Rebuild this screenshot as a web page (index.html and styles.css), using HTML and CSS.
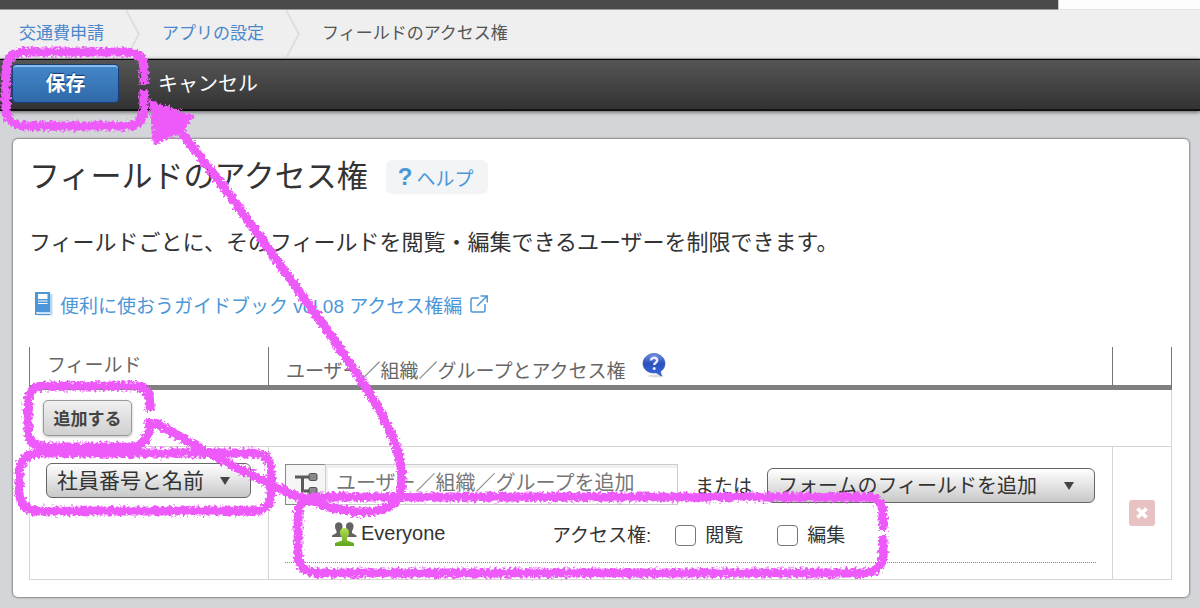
FILE: index.html
```html
<!DOCTYPE html>
<html lang="ja">
<head>
    <meta charset="UTF-8">
    <meta name="viewport" content="width=device-width, initial-scale=1.0">
    <title>フィールドのアクセス権</title>
    <link rel="stylesheet" href="styles.css">
</head>
<body>
    <div class="topbar">
        <div class="topbar-menu"></div>
        <div class="topbar-side"></div>
    </div>

    <nav class="breadcrumb">
        <a href="#">交通費申請</a>
        <svg class="chevron" width="14" height="48" viewBox="0 0 14 48"><path d="M0 0L13 24L0 48"/></svg>
        <a href="#">アプリの設定</a>
        <svg class="chevron" width="14" height="48" viewBox="0 0 14 48"><path d="M0 0L13 24L0 48"/></svg>
        <span>フィールドのアクセス権</span>
    </nav>

    <div class="toolbar">
        <button class="btn-save" type="button">保存</button>
        <button class="btn-cancel" type="button">キャンセル</button>
    </div>

    <main class="panel">
        <div class="title-row">
            <h1>フィールドのアクセス権</h1>
            <a class="help" href="#"><b>?</b>ヘルプ</a>
        </div>
        <p class="lead">フィールドごとに、そのフィールドを閲覧・編集できるユーザーを制限できます。</p>
        <a class="guide" href="#">
            <svg width="18" height="24" viewBox="0 0 18 24">
                <path d="M3 2h14.500v21.500H3z" fill="#b9d8f0"/>
                <path d="M0 0h15v20H1.500v1.500H15V23H0z" fill="#4b97d8"/>
                <path d="M1.500 20.500H15v1.500H1.500z" fill="#d5e8f7"/>
                <path d="M3 2h9.500v5H3zM3 8.500H12.500v1H3zM3 11H12.500v1H3z" fill="#fff"/>
            </svg>
            <span>便利に使おうガイドブック vol.08 アクセス権編</span>
            <svg width="20" height="20" viewBox="0 0 20 20" fill="none" stroke="#4b97d8" stroke-width="1.500">
                <path d="M10 4H3.500Q2 4 2 5.500V16.500Q2 18 3.500 18H14.500Q16 18 16 16.500V10"/>
                <path d="M8 12L18 2M11.500 2H18.200V8.500"/>
            </svg>
        </a>

        <table class="acl">
            <thead>
                <tr>
                    <th class="col-field">フィールド</th>
                    <th class="col-users">
                        <div class="th-users">
                            <span>ユーザー／組織／グループとアクセス権</span>
                            <svg width="24" height="26" viewBox="0 0 24 26">
                                <defs>
                                    <linearGradient id="tip" x1="0" y1="0" x2="0" y2="1">
                                        <stop offset="0" stop-color="#7392e6"/>
                                        <stop offset="0.450" stop-color="#2b50bd"/>
                                        <stop offset="1" stop-color="#3868dc"/>
                                    </linearGradient>
                                </defs>
                                <ellipse cx="14" cy="23" rx="8" ry="1.500" fill="#ddd"/>
                                <path d="M12 0.500C18 0.500 23 5 23 10.500C23 14 21 17 18.500 18.500L19.500 23L14 19.800C7 21 1 16.500 1 10.500C1 5 6 0.500 12 0.500Z" fill="url(#tip)" stroke="#2746a5" stroke-width="0.600"/>
                                <path d="M9 7.500C9 3.800 15.200 3.800 15.200 7.500C15.200 9.800 12.200 9.800 12.200 12" fill="none" stroke="#e8ecfa" stroke-width="2.400"/>
                                <circle cx="12.200" cy="15.500" r="1.500" fill="#e8ecfa"/>
                            </svg>
                        </div>
                    </th>
                    <th class="col-del"></th>
                </tr>
            </thead>
            <tbody>
                <tr class="row-add">
                    <td colspan="3"><button class="btn-add" type="button">追加する</button></td>
                </tr>
                <tr class="row-field">
                    <td class="cell-field">
                        <select class="dropdown" aria-label="フィールド">
                            <option>社員番号と名前</option>
                        </select>
                    </td>
                    <td class="cell-users">
                        <div class="picker">
                            <button class="btn-org" type="button" aria-label="組織">
                                <svg width="24" height="24" viewBox="0 0 24 24">
                                    <path d="M1 5H16M8.500 5V19H16" fill="none" stroke="#5a5a5a" stroke-width="3"/>
                                    <rect x="15" y="1.500" width="8" height="7" rx="1.500" fill="#888" stroke="#4e4e4e"/>
                                    <rect x="15" y="15.500" width="8" height="7" rx="1.500" fill="#888" stroke="#4e4e4e"/>
                                </svg>
                            </button>
                            <input class="user-input" type="text" aria-label="ユーザー" placeholder="ユーザー／組織／グループを追加">
                            <span class="or">または</span>
                            <select class="dropdown dropdown-form" aria-label="フォームのフィールド">
                                <option>フォームのフィールドを追加</option>
                            </select>
                        </div>
                        <div class="entity">
                            <svg width="27" height="26" viewBox="0 0 27 26">
                                <defs>
                                    <linearGradient id="person" x1="0" y1="0" x2="0" y2="1">
                                        <stop offset="0" stop-color="#b5df52"/>
                                        <stop offset="1" stop-color="#5ea51d"/>
                                    </linearGradient>
                                </defs>
                                <g fill="#636363">
                                    <path d="M4 5C4 0 11.500 0 11.500 5C11.500 8 10.500 9 10 10V12L14 14V16H1V14.500L5.500 12V10C4.500 8.500 4 7 4 5Z"/>
                                    <path d="M15 5C15 0 22.500 0 22.500 5C22.500 7 22 8.500 21 10V12L25.500 14.500V16H12V14L16.500 12V10C15.500 8.500 15 7 15 5Z"/>
                                </g>
                                <path d="M9 11C9 5.500 18 5.500 18 11C18 14 17 16 16 17V19.500L23 22V25H4V22L11 19.500V17C10 16 9 14 9 11Z" fill="url(#person)"/>
                            </svg>
                            <span class="entity-name">Everyone</span>
                            <span class="entity-label">アクセス権:</span>
                            <label class="check"><input type="checkbox">閲覧</label>
                            <label class="check"><input type="checkbox">編集</label>
                        </div>
                    </td>
                    <td class="cell-del">
                        <button class="btn-del" type="button" aria-label="削除">
                            <svg width="14" height="14" viewBox="0 0 14 14"><path d="M2.500 2.500L11.500 11.500M11.500 2.500L2.500 11.500" stroke="#fff" stroke-width="3.800"/></svg>
                        </button>
                    </td>
                </tr>
            </tbody>
        </table>
    </main>

    <!-- hand-drawn marks over the screen -->
    <svg class="marks" width="1200" height="608" viewBox="0 0 1200 608">
        <defs>
            <filter id="crayon" filterUnits="userSpaceOnUse" x="0" y="0" width="1200" height="608">
                <feTurbulence type="fractalNoise" baseFrequency="0.350" numOctaves="2" seed="4" result="noise"/>
                <feDisplacementMap in="SourceGraphic" in2="noise" scale="8" xChannelSelector="R" yChannelSelector="G"/>
            </filter>
        </defs>
        <g filter="url(#crayon)" fill="none" stroke="#ee5afa" stroke-width="9">
            <path d="M144 84V70Q144 52 126 52H25Q6 52 6 70V107Q6 126 26 126H126Q144 126 144 107V90"/>
            <path d="M150 411V403Q150 386 133 386H45Q28 386 28 404V430Q28 447 46 447H130Q150 447 150 419"/>
            <path d="M42 453H250Q271 453 271 472V492Q271 511 252 511H40Q19 511 19 490V475Q19 453 42 453Z"/>
            <path d="M883 530V515Q883 497 865 497H318Q298 497 298 517V553Q298 573 318 573H862Q883 573 883 553V536"/>
            <path d="M154 422C190 442 215 458 250 474C285 493 330 512 362 512C385 512 402 505 402 480C402 435 365 385 327 330C300 293 285 271 267 247C245 215 215 175 176 126"/>
            <path d="M151 102L192 117L178 132L155 143Z" fill="#ee5afa" stroke-width="3"/>
        </g>
    </svg>
</body>
</html>
```

FILE: styles.css
```css
* {
    box-sizing: border-box;
}
body {
    margin: 0;
    background-color: #d3d5d8;
    color: #333;
    font-family: "Liberation Sans", "Noto Sans CJK JP", sans-serif;
    font-size: 19px;
}
button, input, select {
    font-family: inherit;
}
a {
    color: #4b97d8;
    text-decoration: none;
}
svg {
    flex: none;
}

/* header */
.topbar {
    display: flex;
    height: 10px;
}
.topbar-menu {
    flex: 1;
    background-color: #4a4a4a;
    border-bottom: 1px solid #999;
}
.topbar-side {
    width: 142px;
    background-color: #fdfdfd;
    border-left: 1px solid #ccc;
    border-bottom: 1px solid #e4e6e6;
}
.breadcrumb {
    display: flex;
    align-items: center;
    gap: 22px;
    height: 49px;
    padding-left: 19px;
    background-color: #efefef;
    border-bottom: 1px solid #bbb;
    font-size: 17px;
    line-height: 24px;
    color: #555;
}
.breadcrumb a {
    color: #4a86cc;
}
.chevron path {
    fill: none;
    stroke: #dedede;
    stroke-width: 2;
}
.toolbar {
    display: flex;
    align-items: center;
    gap: 39px;
    height: 52px;
    padding: 0 12px 2px;
    background: linear-gradient(#555, #333);
    border-top: 1px solid #000;
    border-bottom: 2px solid #111;
    box-shadow: 0 1px 4px rgba(0, 0, 0, 0.6);
}
.btn-save {
    width: 107px;
    height: 39px;
    padding: 0 0 2px;
    border: 1px solid #173f7e;
    border-radius: 4px;
    background: linear-gradient(#4488ca, #2f69a9);
    box-shadow: inset 0 2px 0 #8bbbe8;
    color: white;
    font-size: 20px;
    font-weight: bold;
    text-shadow: 0 -1px 1px #123a70;
    cursor: pointer;
}
.btn-cancel {
    padding: 0 0 2px;
    border: none;
    background: none;
    color: white;
    font-size: 20px;
    cursor: pointer;
}

/* content */
.panel {
    margin: 27px 10px 10px 12px;
    padding: 21px 17px 17px 16px;
    background-color: white;
    border: 1px solid #999;
    border-radius: 6px;
    box-shadow: 0 0 2px rgba(0, 0, 0, 0.3);
}
.title-row {
    display: flex;
    align-items: center;
    gap: 18px;
    height: 34px;
}
h1 {
    margin: 0;
    font-size: 31px;
    font-weight: normal;
    line-height: 34px;
}
.help {
    display: flex;
    align-items: center;
    gap: 4px;
    height: 34px;
    padding: 0 14px 0 12px;
    background-color: #f2f4f6;
    border-radius: 6px;
}
.help b {
    font-size: 24px;
}
.lead {
    margin: 34px 0;
    font-size: 22px;
    line-height: 30px;
}
.guide {
    display: flex;
    align-items: center;
    gap: 7px;
    height: 24px;
    padding-left: 6px;
}

/* table */
.acl {
    width: 100%;
    margin-top: 31px;
    border-collapse: separate;
    border-spacing: 0;
}
.acl th {
    height: 43px;
    padding: 0 17px;
    border-left: 1px solid #777;
    border-bottom: 5px solid #808080;
    color: #666;
    font-weight: normal;
    line-height: 24px;
    text-align: left;
}
.acl th:last-child {
    border-right: 1px solid #777;
}
.acl .col-field {
    width: 239px;
}
.acl .col-del {
    width: 59px;
}
.th-users {
    display: flex;
    align-items: center;
    gap: 16px;
}
.th-users span {
    padding-top: 12px;
}
.acl td {
    padding: 16px;
    border-left: 1px solid #d8d4cf;
    border-bottom: 1px solid #d8d4cf;
    vertical-align: top;
}
.acl td:last-child {
    border-right: 1px solid #d8d4cf;
}
.acl .row-add td {
    height: 57px;
    padding: 10px 13px;
}
.btn-add {
    display: block;
    width: 89px;
    height: 36px;
    padding: 0 0 2px;
    border: 1px solid #999;
    border-radius: 5px;
    background: linear-gradient(#f0f0f0, #d0d0d0);
    box-shadow: 0 1px 3px rgba(0, 0, 0, 0.25);
    color: #444;
    font-size: 17px;
    font-weight: bold;
    cursor: pointer;
}
.dropdown {
    display: block;
    width: 205px;
    height: 35px;
    padding: 0 10px;
    appearance: none;
    border: 1px solid #666;
    border-radius: 6px;
    background: url("data:image/svg+xml,%3Csvg xmlns='http://www.w3.org/2000/svg' width='10' height='8'%3E%3Cpath d='M0 0H10L5 8Z' fill='%23444'/%3E%3C/svg%3E") no-repeat right 20px center, linear-gradient(#fff, #c8c8c8);
    color: #333;
    font-size: 21px;
}
.dropdown-form {
    width: 328px;
    margin-top: 3px;
    font-size: 20px;
}
.acl .row-field td {
    height: 133px;
}
.picker {
    display: flex;
    align-items: center;
    height: 42px;
    white-space: nowrap;
}
.btn-org {
    display: flex;
    align-items: center;
    justify-content: center;
    width: 40px;
    height: 41px;
    padding: 0;
    border: 1px solid #888;
    border-right: none;
    background-color: #f5f5f5;
}
.user-input {
    width: 353px;
    height: 41px;
    padding: 0 10px 2px;
    border: 1px solid #ccc;
    box-shadow: inset 2px 3px 0 #f0f0f0;
    font-size: 20px;
}
.user-input::placeholder {
    color: #777;
}
.or {
    margin: 0 15px 0 17px;
}
.entity {
    display: flex;
    align-items: center;
    height: 58px;
    padding-left: 46px;
    border-bottom: 1px dotted #888;
}
.entity-name {
    width: 194px;
    padding-left: 3px;
    font-size: 20px;
}
.check {
    display: flex;
    align-items: center;
    gap: 9px;
    margin-left: 24px;
}
.check + .check {
    margin-left: 34px;
}
.check input {
    width: 21px;
    height: 21px;
    margin: 4px 0 0;
    appearance: none;
    border: 1px solid #777;
    border-radius: 4px;
    background-color: white;
}
.acl .cell-del {
    vertical-align: middle;
}
.btn-del {
    display: flex;
    align-items: center;
    justify-content: center;
    width: 26px;
    height: 26px;
    padding: 0;
    border: none;
    border-radius: 3px;
    background-color: #e8c2c2;
    cursor: pointer;
}

.marks {
    position: absolute;
    top: 0;
    left: 0;
    pointer-events: none;
}
```
